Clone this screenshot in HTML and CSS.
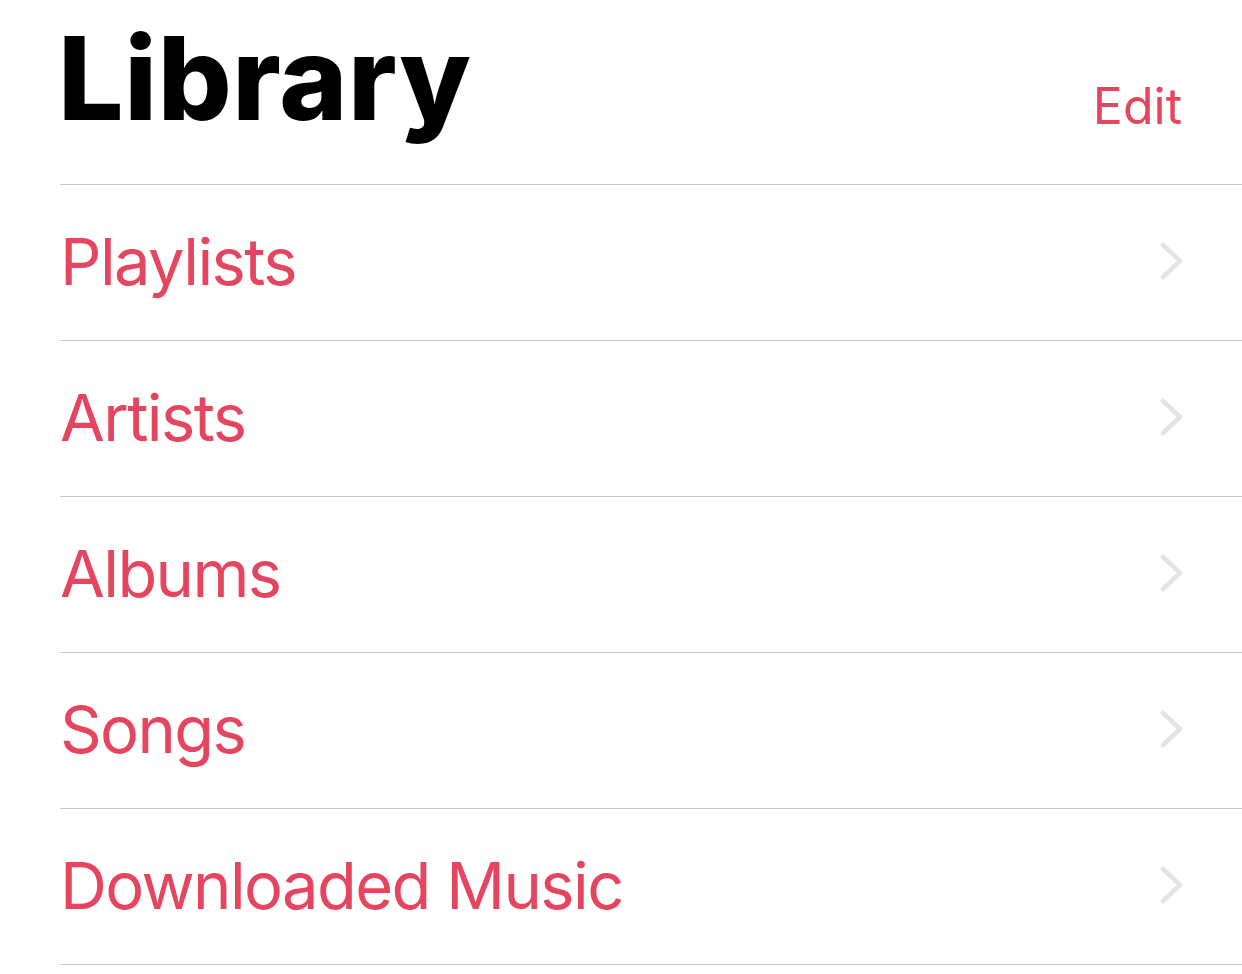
FILE: index.html
```html
<!DOCTYPE html>
<html lang="en">
<head>
  <meta name="viewport" content="width=device-width, initial-scale=1">
  <link rel="stylesheet" href="styles.css">
  <title>Library</title>
</head>
<body>

<div class="page">
  <!-- Title bar -->
  <div class="header">
    <h1>Library</h1>
    <a class="edit" href="#">Edit</a>
  </div>

  <!-- Library sections -->
  <ul class="menu">
    <li><a href="#"><span>Playlists</span>
      <svg class="chevron" viewBox="0 0 24 38"><path d="M3 3 L20 19 L3 35"/></svg></a></li>
    <li><a href="#"><span>Artists</span>
      <svg class="chevron" viewBox="0 0 24 38"><path d="M3 3 L20 19 L3 35"/></svg></a></li>
    <li><a href="#"><span>Albums</span>
      <svg class="chevron" viewBox="0 0 24 38"><path d="M3 3 L20 19 L3 35"/></svg></a></li>
    <li><a href="#"><span>Songs</span>
      <svg class="chevron" viewBox="0 0 24 38"><path d="M3 3 L20 19 L3 35"/></svg></a></li>
    <li><a href="#"><span>Downloaded Music</span>
      <svg class="chevron" viewBox="0 0 24 38"><path d="M3 3 L20 19 L3 35"/></svg></a></li>
  </ul>
</div>

</body>
</html>
```

FILE: styles.css
```css
body {
  font-family: Inter, "Noto Sans", sans-serif;
  background-color: #fff;
  margin: 0;
  padding: 0;
}
.page {
  padding-left: 60px;
}
.header {
  display: flex;
  justify-content: space-between;
  align-items: flex-end;
  height: 185px;
  box-sizing: border-box;
  padding-right: 60px;
  border-bottom: 1px solid #c8c8cc;
}
.header h1 {
  margin: 0 0 48px -2px;
  font-size: 116px;
  font-weight: 800;
  letter-spacing: 0.6px;
  line-height: 1;
  color: #000;
}
.header .edit {
  margin-bottom: 53px;
  font-size: 50px;
  line-height: 1;
  color: #e5455f;
  text-decoration: none;
}
.menu {
  list-style: none;
  margin: 0;
  padding: 0;
}
.menu li {
  border-bottom: 1px solid #c8c8cc;
}
.menu a {
  display: flex;
  justify-content: space-between;
  align-items: center;
  height: 155px;
  padding-right: 58px;
  color: #e5455f;
  text-decoration: none;
  font-size: 65px;
  letter-spacing: -1.6px;
}
.menu span {
  margin-top: -2px;
}
.menu .chevron {
  width: 24px;
  height: 38px;
  margin-top: -3px;
  fill: none;
  stroke: #e2e2e7;
  stroke-width: 4.5;
  stroke-linecap: round;
  stroke-linejoin: round;
}
```
